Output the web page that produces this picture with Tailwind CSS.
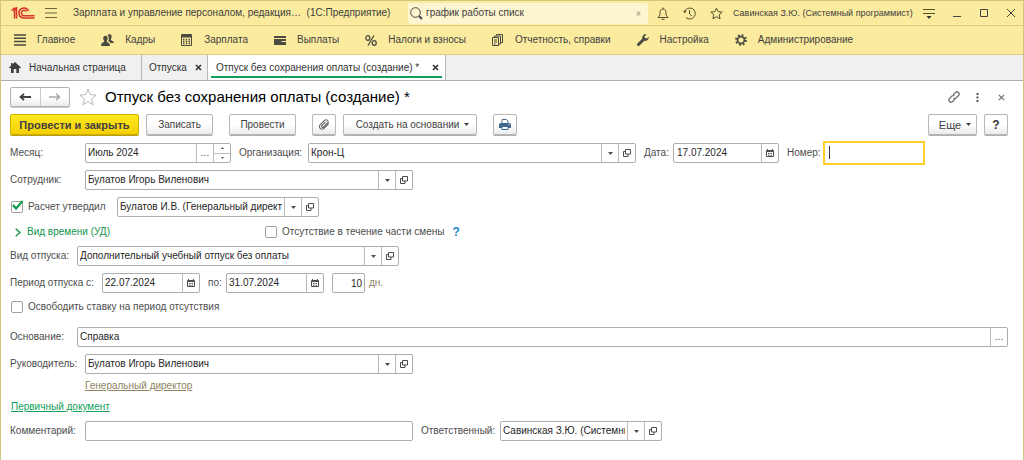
<!DOCTYPE html>
<html lang="ru">
<head>
<meta charset="utf-8">
<title>Отпуск без сохранения оплаты (создание)</title>
<script src="https://cdn.jsdelivr.net/npm/@tailwindcss/browser@4"></script>
</head>
<body class="min-h-screen bg-white font-['Liberation_Sans',Arial,sans-serif] text-[10px] leading-4 text-[#404040]">
<svg class="hidden">
  <symbol id="caret" viewBox="0 0 5 3"><path d="M0 0h5L2.500 3z" fill="currentColor"/></symbol>
  <symbol id="open" viewBox="0 0 8 8"><path d="M2.500.5h5v4.500h-5zM2.500 2.500h-2v5h4.500V5" fill="none" stroke="currentColor"/></symbol>
  <symbol id="cal" viewBox="0 0 8 8"><path d="M.5 1.500h7v6h-7z" fill="none" stroke="currentColor"/><path d="M1 1h6v2H1zM1 0h1v1H1zM6 0h1v1H6zM2 4h1v1H2zM3.500 4h1v1h-1zM5 4h1v1H5zM2 5.800h1v1H2zM3.500 5.800h1v1h-1zM5 5.800h1v1H5z" fill="currentColor"/></symbol>
  <symbol id="cross" viewBox="0 0 7 7"><path d="M1 1l5 5M6 1L1 6" fill="none" stroke="currentColor" stroke-width="1.600"/></symbol>
  <symbol id="thin-cross" viewBox="0 0 7 7"><path d="M.8.800l5.400 5.400M6.200.8L.8 6.200" fill="none" stroke="currentColor" stroke-width="1.200"/></symbol>
</svg>
<div class="flex min-h-screen flex-col border-x border-t border-[#d3c578]">
  <header class="bg-[#fbeb9e]">
    <div class="flex h-[25px] items-center border-b border-[#dccb80] pl-[10px] pr-[8px]">
      <svg class="h-[12px] w-[24px] shrink-0" viewBox="0 0 24 12" fill="none" stroke="#d9342b" stroke-width="1.500"><path d="M.5 3.500L3.500 1.200V11.500M2.500 4.500L5.500 1V11.500M17.500 4A5 5 0 1 0 12.500 11H23.500M15.500 4.500A2.800 2.800 0 1 0 12.500 8.800H23.500"/></svg>
      <button class="ml-[10px] shrink-0" aria-label="Меню"><svg class="h-[10px] w-[12px]" viewBox="0 0 12 10" stroke="#6a6340"><path d="M0 .5h12M0 5h12M0 9.500h12"/></svg></button>
      <h1 class="ml-[16px] w-[335px] shrink-0 whitespace-pre">Зарплата и управление персоналом, редакция…  (1С:Предприятие)</h1>
      <div class="flex h-[21px] w-[240px] shrink-0 items-center rounded-[2px] bg-[#fdf5cf] pl-[2px] pr-[7px]">
        <svg class="h-[13px] w-[13px] shrink-0" viewBox="0 0 13 13" fill="none" stroke="#444"><circle cx="5.500" cy="5.500" r="4.800"/><path d="M9 9l3 3" stroke-width="2"/></svg>
        <input class="ml-[3px] min-w-0 flex-1 bg-transparent outline-none" aria-label="Поиск" value="график работы списк">
        <button class="text-[#aaa68f]" aria-label="Очистить"><svg class="h-[5px] w-[5px]"><use href="#cross"/></svg></button>
      </div>
      <div class="ml-[9px] flex shrink-0 items-center gap-[14px]">
        <button aria-label="Уведомления"><svg class="h-[13px] w-[12px]" viewBox="0 0 12 13" fill="none" stroke="#55502f"><path d="M1 10.500h10L9 8V5.500C9 3.500 8 2 6 2S3 3.500 3 5.500V8zM6 .5V2"/><path d="M4.500 12.300h3"/></svg></button>
        <button aria-label="История"><svg class="h-[13px] w-[13px]" viewBox="0 0 13 13" fill="none" stroke="#55502f"><path d="M1.500 5A5.500 5.500 0 1 1 3 10.500M6.500 3v4l2.500 2"/><path d="M0 4l3.500-.5L2 6.500z" fill="#55502f" stroke="none"/></svg></button>
        <button aria-label="Избранное"><svg class="h-[13px] w-[13px]" viewBox="0 0 13 13" fill="none" stroke="#55502f"><path d="M6.500 1l1.700 3.700 4 .4-3 2.700.9 4-3.600-2.100-3.600 2.100.9-4-3-2.700 4-.4z"/></svg></button>
      </div>
      <span class="ml-[10px] w-[180px] shrink-0 whitespace-nowrap text-[9px]">Савинская З.Ю. (Системный программист)</span>
      <button class="ml-[10px]" aria-label="Настройки"><svg class="h-[11px] w-[12px]" viewBox="0 0 12 11" stroke="#55502f"><path d="M0 1.500h12M0 5.500h12"/><path d="M3.500 8h5L6 11z" fill="#333" stroke="none"/></svg></button>
      <div class="ml-auto flex shrink-0 items-center gap-[19px]">
        <button aria-label="Свернуть"><svg class="h-[8px] w-[8px]" viewBox="0 0 8 8" stroke="#444"><path d="M0 7.500h8"/></svg></button>
        <button aria-label="Развернуть"><svg class="h-[8px] w-[8px]" viewBox="0 0 8 8" fill="none" stroke="#444"><path d="M.5.5h7v7h-7z"/></svg></button>
        <button aria-label="Закрыть"><svg class="h-[8px] w-[8px]" viewBox="0 0 8 8" stroke="#444"><path d="M0 0l8 8M8 0L0 8"/></svg></button>
      </div>
    </div>
    <nav class="flex h-[29px] items-center gap-[26px] border-b border-[#dccb80] pl-[13px] whitespace-nowrap">
      <a href="#" class="flex items-center gap-[11px]"><svg class="h-[12px] w-[12px]" viewBox="0 0 12 12" stroke="#4a4a40" stroke-width="1.500"><path d="M0 1h12M0 4.300h12M0 7.600h12M0 11h12"/></svg>Главное</a>
      <a href="#" class="flex items-center gap-[11px]"><svg class="h-[12px] w-[13px]" viewBox="0 0 13 12" fill="#4a4a40"><path d="M6.500.8C7 .2 9.500-.3 10.300 1c.6 1 .2 3.500-.6 4.500.2 1.500 3 1 3.300 3.500H9.500L7.300 6.800C8.300 5 8 2.500 6.500.8z"/><path d="M4.500 1.800c2.700 0 2.700 3.700 1.200 5.200 0 1.700 3.300 1 3.300 5H0c0-4 3.300-3.300 3.300-5C1.800 5.500 1.800 1.800 4.500 1.800z"/></svg>Кадры</a>
      <a href="#" class="flex items-center gap-[12px]"><svg class="h-[12px] w-[11px]" viewBox="0 0 11 12"><path d="M.5.5h10v11H.5z" fill="none" stroke="#4a4a40"/><path d="M1 1h9v2.500H1z" fill="#4a4a40"/><path d="M2 5.500h7M2 7.500h7M2 9.500h7" stroke="#4a4a40" stroke-width="1.300" stroke-dasharray="1.400"/></svg>Зарплата</a>
      <a href="#" class="flex items-center gap-[11px]"><svg class="h-[10px] w-[12px]" viewBox="0 0 12 10" fill="#4a4a40"><path d="M0 1h12v2H0zM0 4h12v6H0z"/><path d="M7.500 6.500H12" stroke="#fbeb9e"/></svg>Выплаты</a>
      <a href="#" class="flex items-center gap-[11px]"><svg class="h-[11px] w-[12px]" viewBox="0 0 12 11" fill="none" stroke="#4a4a40" stroke-width="1.300"><ellipse cx="2.800" cy="3" rx="2" ry="2.300"/><ellipse cx="9.200" cy="8" rx="2" ry="2.300"/><path d="M9 .5L3 10.500"/></svg>Налоги и взносы</a>
      <a href="#" class="flex items-center gap-[12px]"><svg class="h-[12px] w-[11px]" viewBox="0 0 11 12" fill="none" stroke="#4a4a40"><path d="M.5 3.500h6v8h-6zM2.500 3V2h6v8H7M4.500 1.500V.5h6v8H9M2 6h3M2 8h3M2 10h1.500"/></svg>Отчетность, справки</a>
      <a href="#" class="flex items-center gap-[11px]"><svg class="h-[12px] w-[12px]" viewBox="0 0 12 12"><path d="M1.500 10.500L7 5" stroke="#4a4a40" stroke-width="3" stroke-linecap="round"/><path d="M9.500.2A3.500 3.500 0 0 0 5.600 5L8 7c2 0 4-1.500 4-4.200L10 4.500 7.800 4 7.500 2.200z" fill="#4a4a40"/></svg>Настройка</a>
      <a href="#" class="flex items-center gap-[11px]"><svg class="h-[12px] w-[12px]" viewBox="0 0 12 12" fill="none" stroke="#4a4a40"><circle cx="6" cy="6" r="3.400" stroke-width="1.700"/><circle cx="6" cy="6" r="5" stroke-width="1.800" stroke-dasharray="1.960"/></svg>Администрирование</a>
    </nav>
  </header>
  <div class="flex h-[26px] border-b border-[#adadad] bg-[#f0f0f0] whitespace-nowrap text-[#333]">
    <a href="#" class="flex w-[141px] items-center gap-[8px] border-r border-[#b8b8b8] pl-[8px]"><svg class="h-[11px] w-[12px]" viewBox="0 0 12 11" fill="#3f3f3f"><path d="M6 0l6 5.500-1 1L10 5.700V11H7.300V7H4.700v4H2V5.700l-1 .8-1-1L2 3.700V1h1.500v1.200z"/></svg>Начальная страница</a>
    <div class="flex w-[66px] items-center justify-between border-r border-[#b8b8b8] pl-[7px] pr-[5px]"><a href="#">Отпуска</a><button aria-label="Закрыть вкладку"><svg class="h-[7px] w-[7px]"><use href="#cross"/></svg></button></div>
    <div class="relative flex w-[238px] items-center justify-between border-r border-[#b8b8b8] bg-white pl-[8px] pr-[6px]"><a href="#">Отпуск без сохранения оплаты (создание) *</a><button aria-label="Закрыть вкладку"><svg class="h-[7px] w-[7px]"><use href="#cross"/></svg></button><span class="absolute inset-x-[3px] bottom-[2px] h-[2px] bg-[#0f9d58]"></span></div>
  </div>

  <main class="flex-1 bg-white pl-[9px] pr-[15px] pt-[6px] pb-4">
    <div class="flex h-[20px] items-center">
      <div class="flex h-[20px] w-[60px] shrink-0 rounded-[2px] border border-[#b0b0b0] bg-linear-to-b from-white from-50% to-[#ececec] shadow-[0_1px_0_#ccc]">
        <button class="flex flex-1 items-center justify-center border-r border-[#ccc]" aria-label="Назад"><svg class="h-[8px] w-[12px]" viewBox="0 0 12 8" fill="none" stroke="#404040" stroke-width="1.800"><path d="M12 4H2M5 .8L1.500 4 5 7.200"/></svg></button>
        <button class="flex flex-1 items-center justify-center" aria-label="Вперед"><svg class="h-[8px] w-[12px]" viewBox="0 0 12 8" fill="none" stroke="#a8a8a8" stroke-width="1.500"><path d="M0 4h10M7 .8L10.500 4 7 7.200"/></svg></button>
      </div>
      <button class="ml-[9px]" aria-label="В избранное"><svg class="h-[18px] w-[18px]" viewBox="0 0 18 18" fill="none" stroke="#b4bac0"><path d="M9 1l2.200 5.600 6 .4-4.600 3.900 1.500 5.900L9 13.500l-5.100 3.300 1.500-5.900L.8 7l6-.4z"/></svg></button>
      <h2 class="ml-[8px] whitespace-nowrap text-[15px] leading-5 text-black">Отпуск без сохранения оплаты (создание) *</h2>
      <div class="ml-auto flex items-center text-[#707070]">
        <button aria-label="Ссылка"><svg class="h-[12px] w-[12px]" viewBox="0 0 12 12" fill="none" stroke="currentColor" stroke-width="1.200"><path d="M5 4l2.500-2.500a2.100 2.100 0 0 1 3 3L8 7a2 2 0 0 1-2.500 0M7 8l-2.500 2.500a2.100 2.100 0 0 1-3-3L4 5a2 2 0 0 1 2.500 0"/></svg></button>
        <button class="ml-[16px]" aria-label="Еще действия"><svg class="h-[9px] w-[3px]" viewBox="0 0 3 9" fill="#555"><path d="M.5 0h2v2h-2zM.5 3.500h2v2h-2zM.5 7h2v2h-2z"/></svg></button>
        <button class="ml-[19px] mr-[3px]" aria-label="Закрыть форму"><svg class="h-[7px] w-[7px]"><use href="#thin-cross"/></svg></button>
      </div>
    </div>

    <div class="mt-[7px] flex h-[21px] items-stretch whitespace-nowrap">
      <button class="w-[129px] rounded-[2px] border border-[#cdb000] bg-linear-to-b from-[#ffea1f] to-[#f5cf00] text-[11px] font-bold shadow-[0_1px_0_#b89e10]">Провести и закрыть</button>
      <button class="ml-[7px] w-[67px] rounded-[2px] border border-[#b8b8b8] bg-linear-to-b from-white from-50% to-[#ececec] shadow-[0_1px_0_#b0b0b0]">Записать</button>
      <button class="ml-[16px] w-[67px] rounded-[2px] border border-[#b8b8b8] bg-linear-to-b from-white from-50% to-[#ececec] shadow-[0_1px_0_#b0b0b0]">Провести</button>
      <button class="ml-[16px] flex w-[24px] items-center justify-center rounded-[2px] border border-[#b8b8b8] bg-linear-to-b from-white from-50% to-[#ececec] shadow-[0_1px_0_#b0b0b0]" aria-label="Файлы"><svg class="h-[11px] w-[11px]" viewBox="0 0 11 11" fill="none" stroke="#666" stroke-width="1.100"><path d="M9.800 4.500L5 9.300A2.600 2.600 0 0 1 1.300 5.600L5.500 1.400a2 2 0 0 1 3 0 2 2 0 0 1 0 2.800L4.600 8a1.100 1.100 0 0 1-1.600-1.600L6.500 3"/></svg></button>
      <button class="ml-[7px] flex w-[134px] items-center justify-center gap-[5px] rounded-[2px] border border-[#b8b8b8] bg-linear-to-b from-white from-50% to-[#ececec] pl-[5px] shadow-[0_1px_0_#b0b0b0]">Создать на основании<svg class="h-[3px] w-[5px]"><use href="#caret"/></svg></button>
      <button class="ml-[16px] flex w-[24px] items-center justify-center rounded-[2px] border border-[#b8b8b8] bg-linear-to-b from-white from-50% to-[#ececec] shadow-[0_1px_0_#b0b0b0]" aria-label="Печать"><svg class="h-[11px] w-[12px]" viewBox="0 0 12 11"><path d="M3 4V.5h4.500L9 2v2" fill="#fff" stroke="#4a7194"/><path d="M1.500 4h9A1.500 1.500 0 0 1 12 5.500V9H0V5.500A1.500 1.500 0 0 1 1.500 4z" fill="#42698d"/><path d="M3 7.500h6v3H3z" fill="#fff" stroke="#42698d"/><path d="M9.500 5.500h1" stroke="#fff"/></svg></button>
      <button class="ml-auto flex w-[49px] items-center justify-center gap-[5px] rounded-[2px] border border-[#b8b8b8] bg-linear-to-b from-white from-50% to-[#ececec] pl-[5px] text-[11px] shadow-[0_1px_0_#b0b0b0]">Еще<svg class="h-[3px] w-[5px]"><use href="#caret"/></svg></button>
      <button class="ml-[7px] w-[24px] rounded-[2px] border border-[#b8b8b8] bg-linear-to-b from-white from-50% to-[#ececec] text-xs font-bold text-[#333] shadow-[0_1px_0_#b0b0b0]">?</button>
    </div>

    <form class="whitespace-nowrap text-[#4d4d4d]">
      <div class="mt-[8px] flex h-[20px] items-center">
        <label for="month" class="w-[75px] shrink-0">Месяц:</label>
        <div class="flex h-[20px] w-[146px] rounded-[2px] border border-[#adadad] bg-white">
          <input id="month" class="min-w-0 flex-1 pl-[2px] text-[#262626] outline-none" value="Июль 2024">
          <button type="button" class="w-[17px] border-l border-[#bbb]">...</button>
          <div class="flex w-[17px] flex-col border-l border-[#bbb]">
            <button type="button" class="flex flex-1 items-center justify-center border-b border-[#bbb]" aria-label="Больше"><svg class="h-[2px] w-[3px]" viewBox="0 0 3 2"><path d="M0 2h3L1.500 0z" fill="#555"/></svg></button>
            <button type="button" class="flex flex-1 items-center justify-center" aria-label="Меньше"><svg class="h-[2px] w-[3px]" viewBox="0 0 3 2"><path d="M0 0h3L1.500 2z" fill="#555"/></svg></button>
          </div>
        </div>
        <label for="org" class="ml-[8px] w-[69px] shrink-0">Организация:</label>
        <div class="flex h-[20px] w-[328px] rounded-[2px] border border-[#adadad] bg-white">
          <input id="org" class="min-w-0 flex-1 pl-[2px] text-[#262626] outline-none" value="Крон-Ц">
          <button type="button" class="flex w-[17px] items-center justify-center border-l border-[#bbb]" aria-label="Выбрать"><svg class="h-[3px] w-[5px]"><use href="#caret"/></svg></button>
          <button type="button" class="flex w-[17px] items-center justify-center border-l border-[#bbb]" aria-label="Открыть"><svg class="h-[8px] w-[8px]"><use href="#open"/></svg></button>
        </div>
        <label for="date" class="ml-[8px] w-[29px] shrink-0">Дата:</label>
        <div class="flex h-[20px] w-[106px] rounded-[2px] border border-[#adadad] bg-white">
          <input id="date" class="min-w-0 flex-1 pl-[3px] text-[#262626] outline-none" value="17.07.2024">
          <button type="button" class="flex w-[17px] items-center justify-center border-l border-[#bbb]" aria-label="Календарь"><svg class="h-[8px] w-[8px]"><use href="#cal"/></svg></button>
        </div>
        <label for="num" class="ml-[8px] w-[36px] shrink-0">Номер:</label>
        <div class="relative flex h-[24px] w-[102px] border-2 border-[#fccf2c] bg-white">
          <input id="num" class="min-w-0 flex-1 pl-[3px] text-[#262626] outline-none" value="">
          <span class="absolute top-[3px] left-[4px] h-[13px] w-px bg-[#333]"></span>
        </div>
      </div>

      <div class="mt-[7px] flex h-[20px] items-center">
        <label for="emp" class="w-[75px] shrink-0">Сотрудник:</label>
        <div class="flex h-[20px] w-[328px] rounded-[2px] border border-[#adadad] bg-white">
          <input id="emp" class="min-w-0 flex-1 pl-[2px] text-[#262626] outline-none" value="Булатов Игорь Виленович">
          <button type="button" class="flex w-[17px] items-center justify-center border-l border-[#bbb]" aria-label="Выбрать"><svg class="h-[3px] w-[5px]"><use href="#caret"/></svg></button>
          <button type="button" class="flex w-[17px] items-center justify-center border-l border-[#bbb]" aria-label="Открыть"><svg class="h-[8px] w-[8px]"><use href="#open"/></svg></button>
        </div>
      </div>

      <div class="mt-[7px] flex h-[20px] items-center">
        <div class="relative ml-px h-[12px] w-[12px] shrink-0">
          <input id="approved" type="checkbox" checked class="block h-[12px] w-[12px] appearance-none rounded-[2px] border border-[#a0a0a0] bg-white">
          <svg class="pointer-events-none absolute -top-[1px] left-[1px] h-[11px] w-[12px]" viewBox="0 0 12 11" fill="none" stroke="#0f9d48" stroke-width="2.200"><path d="M1 5l3 3.500L10.500 1"/></svg>
        </div>
        <label for="approved" class="ml-[5px] w-[89px] shrink-0">Расчет утвердил</label>
        <div class="flex h-[20px] w-[202px] rounded-[2px] border border-[#adadad] bg-white">
          <input aria-label="Утвердил" class="mr-[2px] min-w-0 flex-1 pl-[2px] text-[#262626] outline-none" value="Булатов И.В. (Генеральный директор)">
          <button type="button" class="flex w-[17px] items-center justify-center border-l border-[#bbb]" aria-label="Выбрать"><svg class="h-[3px] w-[5px]"><use href="#caret"/></svg></button>
          <button type="button" class="flex w-[17px] items-center justify-center border-l border-[#bbb]" aria-label="Открыть"><svg class="h-[8px] w-[8px]"><use href="#open"/></svg></button>
        </div>
      </div>

      <div class="mt-[5px] flex h-[20px] items-center">
        <button type="button" class="flex w-[254px] items-center gap-[6px] pl-[5px] text-[#12944d]"><svg class="h-[9px] w-[6px]" viewBox="0 0 6 9" fill="none" stroke="currentColor" stroke-width="1.400"><path d="M.7.7L5 4.500.7 8.300"/></svg>Вид времени (УД)</button>
        <input id="partial" type="checkbox" class="ml-px h-[12px] w-[12px] appearance-none rounded-[2px] border border-[#a0a0a0] bg-white">
        <label for="partial" class="ml-[5px]">Отсутствие в течение части смены</label>
        <button type="button" class="ml-[8px] text-xs font-bold text-[#1b87c9]">?</button>
      </div>

      <div class="mt-[4px] flex h-[20px] items-center">
        <label for="kind" class="w-[67px] shrink-0">Вид отпуска:</label>
        <div class="flex h-[20px] w-[322px] rounded-[2px] border border-[#adadad] bg-white">
          <input id="kind" class="min-w-0 flex-1 pl-[2px] text-[#262626] outline-none" value="Дополнительный учебный отпуск без оплаты">
          <button type="button" class="flex w-[17px] items-center justify-center border-l border-[#bbb]" aria-label="Выбрать"><svg class="h-[3px] w-[5px]"><use href="#caret"/></svg></button>
          <button type="button" class="flex w-[17px] items-center justify-center border-l border-[#bbb]" aria-label="Открыть"><svg class="h-[8px] w-[8px]"><use href="#open"/></svg></button>
        </div>
      </div>

      <div class="mt-[7px] flex h-[20px] items-center">
        <label for="from" class="w-[92px] shrink-0">Период отпуска с:</label>
        <div class="flex h-[20px] w-[98px] rounded-[2px] border border-[#adadad] bg-white">
          <input id="from" class="min-w-0 flex-1 pl-[2px] text-[#262626] outline-none" value="22.07.2024">
          <button type="button" class="flex w-[17px] items-center justify-center border-l border-[#bbb]" aria-label="Календарь"><svg class="h-[8px] w-[8px]"><use href="#cal"/></svg></button>
        </div>
        <label for="to" class="ml-[8px] w-[18px] shrink-0">по:</label>
        <div class="flex h-[20px] w-[98px] rounded-[2px] border border-[#adadad] bg-white">
          <input id="to" class="min-w-0 flex-1 pl-[2px] text-[#262626] outline-none" value="31.07.2024">
          <button type="button" class="flex w-[17px] items-center justify-center border-l border-[#bbb]" aria-label="Календарь"><svg class="h-[8px] w-[8px]"><use href="#cal"/></svg></button>
        </div>
        <input id="days" class="ml-[8px] h-[20px] w-[33px] rounded-[2px] border border-[#adadad] pr-[2px] text-right text-[#262626] outline-none" value="10">
        <label for="days" class="ml-[4px] text-[#8a8368]">дн.</label>
      </div>

      <div class="mt-[4px] flex h-[20px] items-center">
        <input id="release" type="checkbox" class="ml-px h-[12px] w-[12px] appearance-none rounded-[2px] border border-[#a0a0a0] bg-white">
        <label for="release" class="ml-[5px]">Освободить ставку на период отсутствия</label>
      </div>

      <div class="mt-[10px] flex h-[20px] items-center">
        <label for="reason" class="w-[67px] shrink-0">Основание:</label>
        <div class="flex h-[20px] flex-1 rounded-[2px] border border-[#adadad] bg-white">
          <input id="reason" class="min-w-0 flex-1 pl-[2px] text-[#262626] outline-none" value="Справка">
          <button type="button" class="w-[17px] border-l border-[#bbb]">...</button>
        </div>
      </div>

      <div class="mt-[7px] flex h-[20px] items-center">
        <label for="head" class="w-[75px] shrink-0">Руководитель:</label>
        <div class="flex h-[20px] w-[328px] rounded-[2px] border border-[#adadad] bg-white">
          <input id="head" class="min-w-0 flex-1 pl-[2px] text-[#262626] outline-none" value="Булатов Игорь Виленович">
          <button type="button" class="flex w-[17px] items-center justify-center border-l border-[#bbb]" aria-label="Выбрать"><svg class="h-[3px] w-[5px]"><use href="#caret"/></svg></button>
          <button type="button" class="flex w-[17px] items-center justify-center border-l border-[#bbb]" aria-label="Открыть"><svg class="h-[8px] w-[8px]"><use href="#open"/></svg></button>
        </div>
      </div>

      <div class="mt-[2px] flex h-[20px] items-center pl-[75px]"><a href="#" class="text-[#8f8360] underline">Генеральный директор</a></div>
      <div class="mt-px flex h-[20px] items-center pl-px"><a href="#" class="text-[#12a05a] underline">Первичный документ</a></div>

      <div class="mt-[4px] flex h-[20px] items-center">
        <label for="comment" class="w-[75px] shrink-0">Комментарий:</label>
        <input id="comment" class="h-[20px] w-[328px] rounded-[2px] border border-[#adadad] pl-[2px] text-[#262626] outline-none" value="">
        <label for="resp" class="ml-[8px] w-[79px] shrink-0">Ответственный:</label>
        <div class="flex h-[20px] w-[162px] rounded-[2px] border border-[#adadad] bg-white">
          <input id="resp" class="mr-[2px] min-w-0 flex-1 pl-[2px] text-[#262626] outline-none" value="Савинская З.Ю. (Системный программист)">
          <button type="button" class="flex w-[17px] items-center justify-center border-l border-[#bbb]" aria-label="Выбрать"><svg class="h-[3px] w-[5px]"><use href="#caret"/></svg></button>
          <button type="button" class="flex w-[17px] items-center justify-center border-l border-[#bbb]" aria-label="Открыть"><svg class="h-[8px] w-[8px]"><use href="#open"/></svg></button>
        </div>
      </div>
    </form>
  </main>
</div>
</body>
</html>
